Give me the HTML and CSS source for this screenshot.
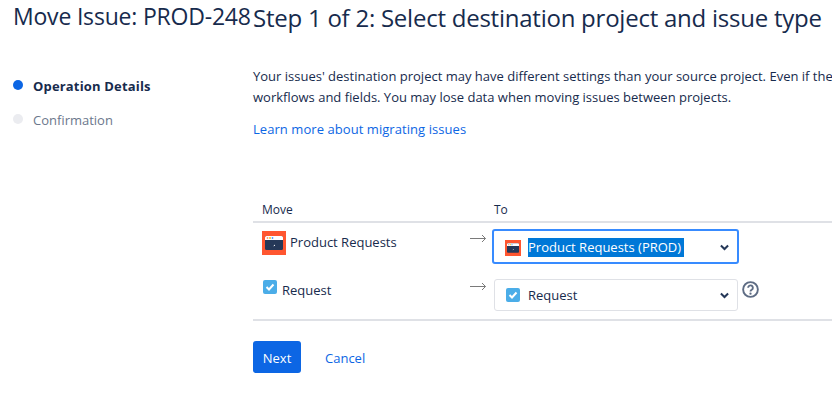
FILE: index.html
```html
<!DOCTYPE html>
<html lang="en">
<head>
<meta charset="utf-8">
<title>Move Issue: PROD-248</title>
<link rel="stylesheet" href="styles.css">
</head>
<body>
<div class="page">
  <aside class="side">
    <h1 class="page-title">Move Issue: PROD-248</h1>
    <ul class="steps">
      <li class="step step-active"><span class="dot"></span>Operation Details</li>
      <li class="step"><span class="dot"></span>Confirmation</li>
    </ul>
  </aside>
  <main class="main">
    <h2 class="step-title">Step 1 of 2: Select destination project and issue type</h2>
    <p class="intro">Your issues' destination project may have different settings than your source project. Even if the<br>workflows and fields. You may lose data when moving issues between projects.</p>
    <p class="learn"><a href="#" class="link">Learn more about migrating issues</a></p>
    <div class="move-table">
      <div class="row head">
        <div class="col-from">Move</div>
        <div class="col-to">To</div>
      </div>
      <div class="row row-project">
        <div class="col-from from-project">
          <svg class="pj-icon" viewBox="0 0 24 24" width="24" height="24"><rect width="24" height="24" fill="#ff5630"/><rect x="3" y="5" width="18" height="14" rx="1.500" fill="#253858"/><path d="M3 9V6.500A1.500 1.500 0 0 1 4.500 5h15A1.500 1.500 0 0 1 21 6.500V9z" fill="#fff"/><circle cx="5.500" cy="7" r=".9" fill="#ff8f73"/><circle cx="8" cy="7" r=".9" fill="#ffc400"/><circle cx="10.500" cy="7" r=".9" fill="#4c9aff"/><path d="M11 15.500l2-2v1.500h-1z" fill="#fff"/></svg>
          <span class="from-name">Product Requests</span>
        </div>
        <svg class="arrow" viewBox="0 0 17 9" width="17" height="9"><path d="M0 4.500h15.500M12 1l3.500 3.500L12 8" fill="none" stroke="#7a7a7a"/></svg>
        <div class="select select-focus">
          <svg class="pj-icon-sm" viewBox="0 0 24 24" width="16" height="16"><rect width="24" height="24" fill="#ff5630"/><rect x="3" y="5" width="18" height="14" rx="1.500" fill="#253858"/><path d="M3 9V6.500A1.500 1.500 0 0 1 4.500 5h15A1.500 1.500 0 0 1 21 6.500V9z" fill="#fff"/><circle cx="5.500" cy="7" r=".9" fill="#ff8f73"/><circle cx="8" cy="7" r=".9" fill="#ffc400"/><circle cx="10.500" cy="7" r=".9" fill="#4c9aff"/><path d="M11 15.500l2-2v1.500h-1z" fill="#fff"/></svg>
          <span class="selected-text">Product Requests (PROD)</span>
          <svg class="chev" viewBox="0 0 10 7" width="9" height="7"><path d="M1 1.200l4 4 4-4" fill="none" stroke="#253858" stroke-width="2.200"/></svg>
        </div>
      </div>
      <div class="row row-type">
        <div class="col-from from-type">
          <svg class="check" viewBox="0 0 14 14" width="14" height="14"><rect width="14" height="14" rx="2" fill="#4bade8"/><path d="M3.500 7l2.500 2.500 4.500-5" fill="none" stroke="#fff" stroke-width="2"/></svg>
          <span>Request</span>
        </div>
        <svg class="arrow" viewBox="0 0 17 9" width="17" height="9"><path d="M0 4.500h15.500M12 1l3.500 3.500L12 8" fill="none" stroke="#7a7a7a"/></svg>
        <div class="select select-plain">
          <svg class="check-sm" viewBox="0 0 14 14" width="14" height="14"><rect width="14" height="14" rx="2" fill="#4bade8"/><path d="M3.500 7l2.500 2.500 4.500-5" fill="none" stroke="#fff" stroke-width="2"/></svg>
          <span>Request</span>
          <svg class="chev" viewBox="0 0 10 7" width="9" height="7"><path d="M1 1.200l4 4 4-4" fill="none" stroke="#253858" stroke-width="2.200"/></svg>
        </div>
        <svg class="help" viewBox="0 0 18 18" width="17" height="17"><circle cx="9" cy="9" r="7.800" fill="none" stroke="#5e6c84" stroke-width="2"/><path d="M6.500 7.200a2.500 2.500 0 1 1 3.800 2.100c-.9.500-1.300.9-1.300 1.800" fill="none" stroke="#5e6c84" stroke-width="2"/><circle cx="9" cy="13.400" r="1.200" fill="#5e6c84"/></svg>
      </div>
    </div>
    <div class="actions">
      <button class="btn-next" type="button">Next</button>
      <a href="#" class="link cancel">Cancel</a>
    </div>
  </main>
</div>
</body>
</html>
```

FILE: styles.css
```css
html, body {
  margin: 0;
  padding: 0;
  height: 400px;
  overflow: hidden;
  background: #fff;
}
body {
  font-family: "Open Sans", "Noto Sans", sans-serif;
  font-size: 13px;
  color: #172b4d;
}
.page {
  display: flex;
  width: 1200px;
  height: 400px;
}
.side {
  width: 253px;
  flex: none;
  padding-left: 13px;
  box-sizing: border-box;
}
.page-title {
  margin: 0;
  font-size: 23px;
  letter-spacing: -0.2px;
  line-height: 32px;
  font-weight: 400;
  white-space: nowrap;
}
.steps {
  list-style: none;
  margin: 37px 0 0;
  padding: 0;
}
.step {
  display: flex;
  align-items: center;
  height: 34px;
  color: #6b778c;
  font-size: 13px;
}
.step-active {
  color: #172b4d;
  font-weight: 700;
  letter-spacing: 0.17px;
}
.dot {
  width: 10px;
  height: 10px;
  border-radius: 50%;
  background: #ebecf0;
  margin-right: 10px;
  position: relative;
  top: -1px;
}
.step-active .dot {
  background: #0c66e4;
}
.main {
  flex: 1;
}
.step-title {
  margin: 2px 0 0;
  font-size: 24px;
  letter-spacing: -0.24px;
  line-height: 32px;
  font-weight: 400;
  white-space: nowrap;
}
.intro {
  margin: 32px 0 0;
  font-size: 13px;
  line-height: 21px;
  white-space: nowrap;
}
.learn {
  margin: 11px 0 0;
  line-height: 20px;
  letter-spacing: 0.06px;
}
.link {
  color: #0c66e4;
  text-decoration: none;
}
.move-table {
  margin-top: 61px;
  border-bottom: 2px solid #dfe1e6;
  width: 900px;
}
.row {
  display: flex;
  align-items: flex-start;
}
.head {
  height: 20px;
  padding-bottom: 1px;
  border-bottom: 2px solid #dfe1e6;
  font-size: 12px;
  line-height: 20px;
}
.col-from {
  width: 241px;
  padding-left: 9px;
  box-sizing: border-box;
  flex: none;
}
.from-project {
  display: flex;
  align-items: flex-start;
  gap: 4px;
  margin-top: 8px;
}
.from-name {
  margin-top: 1px;
  line-height: 20px;
}
.from-type {
  display: flex;
  align-items: flex-start;
  gap: 5px;
  margin-top: 1px;
  line-height: 20px;
}
.check {
  margin-left: 1px;
}
.row-project {
  height: 56px;
}
.row-type {
  height: 40px;
}
.arrow {
  position: relative;
  left: -24px;
  top: 11px;
  margin-right: -17px;
}
.row-type .arrow {
  top: 3px;
}
.select {
  flex: none;
  width: 244px;
  height: 32px;
  border: 1px solid #dfe1e6;
  border-radius: 3px;
  box-sizing: border-box;
  display: flex;
  align-items: center;
  padding-left: 11px;
  gap: 7px;
  position: relative;
}
.select-plain {
  gap: 8px;
}
.select-focus {
  width: 247px;
  height: 35px;
  margin: 6px 0 0 -2px;
  border: 2px solid #388bff;
  padding: 2px 0 0 11px;
}
.selected-text {
  background: #0078d7;
  color: #fff;
  line-height: 19px;
  padding-right: 3px;
}
.chev {
  position: absolute;
  right: 8px;
  top: 50%;
  margin-top: -3px;
}
.help {
  margin: 2px 0 0 4px;
}
.actions {
  display: flex;
  align-items: center;
  margin-top: 20px;
}
.btn-next {
  width: 48px;
  height: 32px;
  border: 0;
  border-radius: 3px;
  background: #0c66e4;
  color: #fff;
  font: inherit;
  padding: 2px 0 0;
}
.cancel {
  margin: 2px 0 0 24px;
}
```
